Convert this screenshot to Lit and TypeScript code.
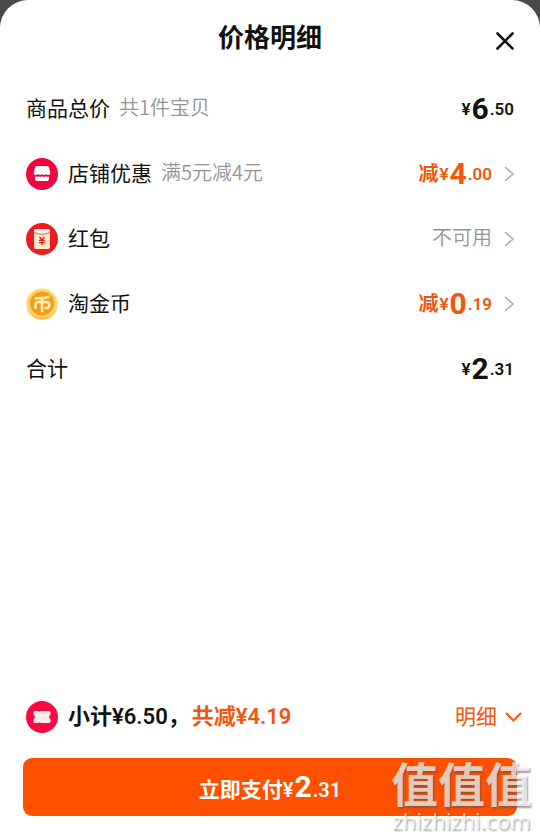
import { LitElement, html, css, nothing, TemplateResult } from "lit";
import { customElement, property } from "lit/decorators.js";

const shopIcon = html`<svg class="icon" viewBox="0 0 32 32" aria-hidden="true">
  <circle cx="16" cy="16" r="16" fill="#f2063d" />
  <path d="M11 8h10q1.600 0 2 1.500l1.200 5q.3 2.500-2 2.500-1.500 0-2.200-1-.8 1-2 1t-2-1q-.8 1-2 1t-2-1q-.7 1-2.200 1-2.300 0-2-2.500l1.200-5Q9.400 8 11 8z" fill="#fff" />
  <path d="M9 18.500q2 .6 3.200-.3 1.800 1 3.800 0 2 1 3.800 0 1.200.9 3.200.3V21q0 2-2 2H11q-2 0-2-2z" fill="#fff" />
</svg>`;

const packetIcon = html`<svg class="icon" viewBox="0 0 32 32" aria-hidden="true">
  <circle cx="16" cy="16" r="16" fill="#ee1c1e" />
  <rect x="8" y="6" width="16" height="20" rx="2" fill="#ffe6cc" />
  <path d="M8 9q8 4 16 0V8q0-2-2-2H10q-2 0-2 2z" fill="#fff4e8" />
  <path d="M8 9.500q8 3.500 16 0" fill="none" stroke="#e8703f" stroke-width="1.200" />
  <path d="M13.500 14l2.500 3 2.500-3M16 17v5M13 17.300h6M13 19.700h6" fill="none" stroke="#d92a1c" stroke-width="1.300" />
</svg>`;

const coinIcon = html`<svg class="icon" viewBox="0 0 32 32" aria-hidden="true">
  <circle cx="16" cy="16" r="15.500" fill="#ffd56a" />
  <path d="M.5 16a15.500 15.500 0 0 0 31 0 15.500 14 0 0 1-31 0z" fill="#ffb52e" />
  <circle cx="16" cy="15.500" r="12" fill="#fb9a17" />
  <path d="M9.500 10.200q7 .3 13-1.200M9.500 20v-3.500q0-2.500 2.500-2.500h8.500q2.800 0 2.800 3t-2.800 3H19.500M16 10v13" fill="none" stroke="#fff0b8" stroke-width="2.600" stroke-linecap="round" />
</svg>`;

const couponIcon = html`<svg class="icon" viewBox="0 0 32 32" aria-hidden="true">
  <circle cx="16" cy="16" r="16" fill="#fa0a43" />
  <path d="M9 10h3.500q1.200 1.600 2.400 0H23q1.500 0 1.500 1.500v2q-2.800 2.500 0 5v2Q24.500 22 23 22h-8.100q-1.200-1.600-2.400 0H9q-1.500 0-1.500-1.500v-2q2.800-2.500 0-5v-2Q7.500 10 9 10z" fill="#ffebe8" />
</svg>`;

const chevron = html`<svg class="chevron" viewBox="0 0 10 16" aria-hidden="true">
  <path d="M1 1l8 7-8 7" fill="none" stroke="#b0b0b0" stroke-width="1.600" />
</svg>`;

@customElement("price-amount")
class PriceAmount extends LitElement {
  @property() prefix = "";
  @property() value = "0.00";

  static styles = css`
    :host {
      display: inline-flex;
      align-items: var(--amount-align, center);
      gap: 1px;
      font-family: Roboto, "Noto Sans CJK SC", sans-serif;
      font-size: var(--amount-small, 17px);
      font-weight: 600;
      line-height: 32px;
      white-space: nowrap;
    }
    .prefix {
      padding-bottom: 2px;
      font-family: "Noto Sans CJK SC", sans-serif;
      font-size: 20px;
      font-weight: 700;
    }
    .whole {
      font-size: 30px;
      font-weight: 700;
    }
  `;

  render() {
    const [whole, cents] = this.value.split(".");
    return html`${this.prefix
        ? html`<span class="prefix">${this.prefix}</span>`
        : nothing}<span>¥</span><span class="whole">${whole}</span><span>.${cents}</span>`;
  }
}

interface Line {
  label: string;
  note?: string;
  icon?: TemplateResult;
  prefix?: string;
  amount?: string;
  status?: string;
  opens?: boolean;
}

const lines: Line[] = [
  { label: "商品总价", note: "共1件宝贝", amount: "6.50" },
  { label: "店铺优惠", note: "满5元减4元", icon: shopIcon, prefix: "减", amount: "4.00", opens: true },
  { label: "红包", icon: packetIcon, status: "不可用", opens: true },
  { label: "淘金币", icon: coinIcon, prefix: "减", amount: "0.19", opens: true },
  { label: "合计", amount: "2.31" },
];

@customElement("app-root")
class AppRoot extends LitElement {
  static styles = css`
    :host {
      display: block;
      background: #4a4a4a;
      color: #111;
      font-family: "Noto Sans CJK SC", sans-serif;
    }
    * {
      box-sizing: border-box;
    }
    button {
      margin: 0;
      padding: 0;
      border: 0;
      background: none;
      color: inherit;
      font: inherit;
      text-align: left;
      cursor: pointer;
    }
    .sheet {
      display: flex;
      flex-direction: column;
      min-height: 100vh;
      background: #fff;
      border-radius: 28px 28px 0 0;
    }
    .header {
      display: grid;
      grid-template-columns: 1fr auto 1fr;
      align-items: center;
      height: 76px;
      padding: 0 26px;
    }
    .title {
      grid-column: 2;
      margin: 0;
      padding-bottom: 4px;
      font-size: 26px;
      font-weight: 700;
      line-height: 40px;
    }
    .close {
      justify-self: end;
      display: flex;
      padding-top: 6px;
    }
    .close svg {
      width: 18px;
      height: 18px;
    }
    .lines {
      flex: 1;
      margin: 0;
      padding: 0;
      list-style: none;
    }
    .line {
      display: flex;
      align-items: center;
      width: 100%;
      height: 65px;
      padding: 0 26px;
    }
    .icon {
      flex: none;
      width: 32px;
      height: 32px;
      margin-right: 10px;
    }
    .label,
    .note,
    .status {
      padding-bottom: 4px;
      line-height: 32px;
    }
    .label {
      font-size: 21px;
    }
    .note,
    .status {
      color: #949494;
      font-size: 20px;
      font-weight: 350;
    }
    .note {
      margin-left: 9px;
    }
    .value {
      display: flex;
      align-items: center;
      margin-left: auto;
    }
    .saving {
      color: #f0560e;
    }
    .chevron {
      width: 10px;
      height: 16px;
      margin-left: 12px;
    }
    .footer {
      padding-bottom: 22px;
    }
    .summary {
      display: flex;
      align-items: center;
      height: 82px;
      padding: 0 18px 0 26px;
      font-family: Roboto, "Noto Sans CJK SC", sans-serif;
      font-size: 22px;
      font-weight: 600;
      line-height: 32px;
    }
    .summary .saving {
      margin-left: 2px;
    }
    .detail {
      display: flex;
      align-items: center;
      gap: 8px;
      margin-left: auto;
      color: #f0560e;
      font-size: 21px;
      font-weight: 400;
    }
    .detail svg {
      width: 17px;
      height: 10px;
    }
    .actions {
      padding: 0 23px;
    }
    .pay {
      --amount-small: 20px;
      --amount-align: baseline;
      display: flex;
      align-items: baseline;
      justify-content: center;
      width: 100%;
      height: 58px;
      padding-top: 2px;
      border-radius: 9px;
      background: #ff5000;
      color: #fff;
      font-size: 21px;
      font-weight: 700;
      line-height: 56px;
    }
    .mark {
      position: fixed;
      right: 8px;
      bottom: 6px;
      color: rgba(255, 255, 255, 0.7);
      font-weight: 700;
      text-align: center;
      text-shadow: 1px 2px 2px rgba(80, 80, 80, 0.55);
      pointer-events: none;
    }
    .mark-name {
      font-size: 47px;
      line-height: 52px;
    }
    .mark-site {
      font-family: "Open Sans", sans-serif;
      font-size: 22px;
      font-weight: 500;
      line-height: 24px;
    }
  `;

  private line(l: Line) {
    const body = html`${l.icon ?? nothing}
      <span class="label">${l.label}</span>
      ${l.note ? html`<span class="note">${l.note}</span>` : nothing}
      <span class="value ${l.prefix ? "saving" : ""}">
        ${l.amount
          ? html`<price-amount .prefix=${l.prefix ?? ""} .value=${l.amount}></price-amount>`
          : html`<span class="status">${l.status}</span>`}
        ${l.opens ? chevron : nothing}
      </span>`;
    return html`<li>
      ${l.opens
        ? html`<button class="line" type="button">${body}</button>`
        : html`<div class="line">${body}</div>`}
    </li>`;
  }

  render() {
    return html`
      <main class="sheet">
        <header class="header">
          <h1 class="title">价格明细</h1>
          <button class="close" type="button" aria-label="关闭">
            <svg viewBox="0 0 18 18" aria-hidden="true">
              <path d="M1.500 1.500l15 15M16.500 1.500l-15 15" stroke="#111" stroke-width="2.600" stroke-linecap="round" />
            </svg>
          </button>
        </header>
        <ul class="lines">
          ${lines.map((l) => this.line(l))}
        </ul>
        <footer class="footer">
          <div class="summary">
            ${couponIcon}
            <span>小计¥6.50，</span>
            <span class="saving">共减¥4.19</span>
            <button class="detail" type="button">
              明细
              <svg viewBox="0 0 17 10" aria-hidden="true">
                <path d="M1 1l7.500 7.500L16 1" fill="none" stroke="#f0560e" stroke-width="2" />
              </svg>
            </button>
          </div>
          <div class="actions">
            <button class="pay" type="button">
              立即支付<price-amount .value=${"2.31"}></price-amount>
            </button>
          </div>
        </footer>
      </main>
      <div class="mark">
        <div class="mark-name">值值值</div>
        <div class="mark-site">zhizhizhi.com</div>
      </div>
    `;
  }
}
